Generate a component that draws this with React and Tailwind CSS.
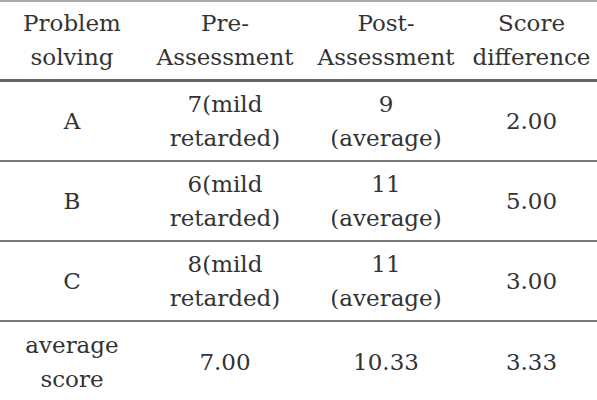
const ROWS = [
  { label: ['A'], pre: ['7(mild', 'retarded)'], post: ['9', '(average)'], diff: ['2.00'] },
  { label: ['B'], pre: ['6(mild', 'retarded)'], post: ['11', '(average)'], diff: ['5.00'] },
  { label: ['C'], pre: ['8(mild', 'retarded)'], post: ['11', '(average)'], diff: ['3.00'] },
  { label: ['average', 'score'], pre: ['7.00'], post: ['10.33'], diff: ['3.33'] },
]

const HEAD = [['Problem', 'solving'], ['Pre-', 'Assessment'], ['Post-', 'Assessment'], ['Score', 'difference']]

function Cell({ lines }) {
  return (
    <td className="px-0 py-[5px] text-center align-middle">
      {lines.map((l, i) => (
        <div key={i} className="whitespace-nowrap">{l}</div>
      ))}
    </td>
  )
}

export default function App() {
  return (
    <div className="w-[597px] h-[400px] overflow-hidden bg-white">
      <table className="w-[597px] table-fixed border-collapse font-['DejaVu_Serif',serif] text-[23px] leading-[34px] text-[#333]">
        <colgroup>
          <col className="w-[144px]" />
          <col className="w-[162px]" />
          <col className="w-[160px]" />
          <col className="w-[131px]" />
        </colgroup>
        <thead>
          <tr className="border-t-2 border-b-[3px] border-t-[#aaa] border-b-[#666]">
            {HEAD.map((h, i) => (
              <th key={i} className="px-0 pt-[4px] pb-[5px] text-center font-normal align-middle">
                {h.map((l, j) => (
                  <div key={j} className="whitespace-nowrap">{l}</div>
                ))}
              </th>
            ))}
          </tr>
        </thead>
        <tbody>
          {ROWS.map((r, i) => (
            <tr key={i} className={i < ROWS.length - 1 ? 'h-[80px] border-b-2 border-b-[#777]' : 'h-[80px]'}>
              <Cell lines={r.label} />
              <Cell lines={r.pre} />
              <Cell lines={r.post} />
              <Cell lines={r.diff} />
            </tr>
          ))}
        </tbody>
      </table>
    </div>
  )
}
